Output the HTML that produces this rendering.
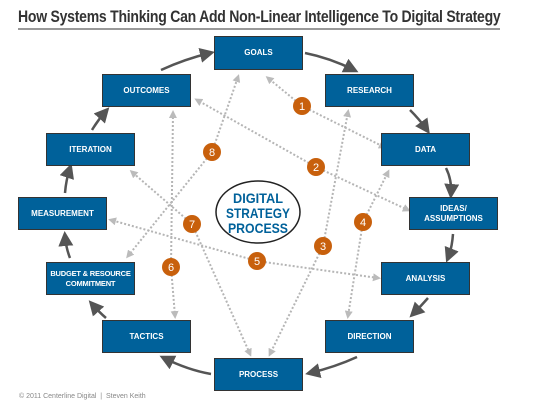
<!DOCTYPE html>
<html><head><style>
body{margin:0;width:535px;height:408px;background:#fff;overflow:hidden;font-family:"Liberation Sans",sans-serif;position:relative}
.t{position:absolute;left:18px;top:7px;font-size:17px;font-weight:bold;color:#333;letter-spacing:-0.3px;white-space:nowrap;transform:scaleX(0.825);transform-origin:left}
.rule{position:absolute;left:18px;top:28px;width:482px;height:2px;background:#999}
.b{position:absolute;width:87px;height:31px;background:#00619a;border:1px solid #333;color:#fff;font-size:8px;font-weight:bold;display:flex;align-items:center;justify-content:center;text-align:center;line-height:10px;white-space:nowrap}
.f{position:absolute;left:19px;top:393px;font-size:7px;color:#888}
svg{position:absolute;left:0;top:0}
</style></head><body>
<div class="t">How Systems Thinking Can Add Non-Linear Intelligence To Digital Strategy</div>
<div class="rule"></div>
<svg width="535" height="408">
<defs>
<marker id="a" markerWidth="6" markerHeight="6" refX="4" refY="3" orient="auto"><path d="M0,0L6,3L0,6z" fill="#555"/></marker>
<marker id="g" markerWidth="4" markerHeight="4" refX="2.5" refY="2" orient="auto"><path d="M0,0L4,2L0,4z" fill="#bbb"/></marker>
</defs>
<g fill="none" stroke="#b5b5b5" stroke-width="2" stroke-dasharray="2,2" marker-end="url(#g)">
<path d="M302,106 L268,78" /><path d="M302,106 L384,147"/>
<path d="M316,167 L197,100"/><path d="M316,167 L408,210"/>
<path d="M212,152 L238,77"/><path d="M212,152 L128,256"/>
<path d="M192,224 L132,172"/><path d="M192,224 L250,354"/>
<path d="M171,267 L173,113"/><path d="M171,267 L175,316"/>
<path d="M257,261 L111,220"/><path d="M257,261 L378,278"/>
<path d="M323,246 L348,112"/><path d="M323,246 L270,354"/>
<path d="M363,222 L388,172"/><path d="M363,222 L348,316"/>
</g>
<g fill="none" stroke="#555" stroke-width="2.5" marker-end="url(#a)">
<path d="M161,70 Q185,59 210,53"/>
<path d="M305,53 Q330,58 354,70"/>
<path d="M410,110 Q420,120 427,130"/>
<path d="M446,168 Q452,180 451,194"/>
<path d="M453,234 Q452,248 448,258"/>
<path d="M428,298 Q421,306 413,314"/>
<path d="M357,357 Q335,367 310,373"/>
<path d="M211,374 Q188,370 164,358"/>
<path d="M106,318 Q99,312 92,304"/>
<path d="M70,258 Q66,248 65,236"/>
<path d="M65,193 Q66,180 70,168"/>
<path d="M92,130 Q98,120 106,111"/>
</g>
<ellipse cx="258" cy="212" rx="42" ry="31" fill="#fff" stroke="#222" stroke-width="1.5"/>
<g font-size="14" font-weight="bold" fill="#00619a" text-anchor="middle" font-family="Liberation Sans">
<text x="258" y="203" textLength="50" lengthAdjust="spacingAndGlyphs">DIGITAL</text>
<text x="258" y="218" textLength="64" lengthAdjust="spacingAndGlyphs">STRATEGY</text>
<text x="258" y="233" textLength="60" lengthAdjust="spacingAndGlyphs">PROCESS</text>
</g>
<g font-size="11" fill="#fff" text-anchor="middle" font-family="Liberation Sans">
<circle cx="302" cy="106" r="9" fill="#c8600c"/><text x="302" y="110">1</text>
<circle cx="316" cy="167" r="9" fill="#c8600c"/><text x="316" y="171">2</text>
<circle cx="212" cy="152" r="9" fill="#c8600c"/><text x="212" y="156">8</text>
<circle cx="192" cy="224" r="9" fill="#c8600c"/><text x="192" y="228">7</text>
<circle cx="363" cy="222" r="9" fill="#c8600c"/><text x="363" y="226">4</text>
<circle cx="323" cy="246" r="9" fill="#c8600c"/><text x="323" y="250">3</text>
<circle cx="257" cy="261" r="9" fill="#c8600c"/><text x="257" y="265">5</text>
<circle cx="171" cy="267" r="9" fill="#c8600c"/><text x="171" y="271">6</text>
</g>
</svg>
<div class="b" style="left:214px;top:36px;height:32px">GOALS</div>
<div class="b" style="left:102px;top:74px">OUTCOMES</div>
<div class="b" style="left:325px;top:74px">RESEARCH</div>
<div class="b" style="left:46px;top:133px">ITERATION</div>
<div class="b" style="left:381px;top:133px">DATA</div>
<div class="b" style="left:18px;top:197px">MEASUREMENT</div>
<div class="b" style="left:409px;top:197px">IDEAS/<br>ASSUMPTIONS</div>
<div class="b" style="left:46px;top:262px;font-size:7.5px;letter-spacing:-0.2px">BUDGET &amp; RESOURCE<br>COMMITMENT</div>
<div class="b" style="left:381px;top:262px">ANALYSIS</div>
<div class="b" style="left:102px;top:320px">TACTICS</div>
<div class="b" style="left:325px;top:320px">DIRECTION</div>
<div class="b" style="left:214px;top:358px">PROCESS</div>
<div class="f">© 2011 Centerline Digital &nbsp;|&nbsp; Steven Keith</div>
</body></html>
